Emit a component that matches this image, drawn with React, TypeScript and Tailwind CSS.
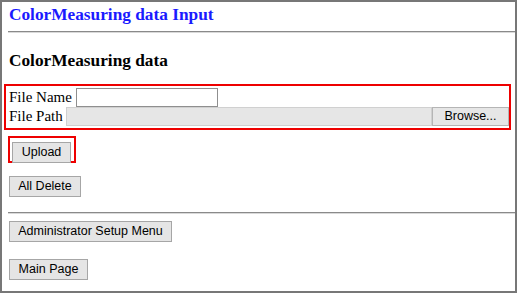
import React from 'react';

const serif = { fontFamily: '"Liberation Serif", "Times New Roman", serif' };

function Btn({ children, className = '' }: { children: React.ReactNode; className?: string }) {
    return (
        <button
            className={`h-[21px] px-0 whitespace-nowrap bg-[#e5e5e5] border border-[#a6a6a6] text-[12.5px] leading-none text-black font-['Liberation_Sans',Arial,sans-serif] ${className}`}
        >
            {children}
        </button>
    );
}

export default function App() {
    return (
        <div className="w-[517px] h-[293px] border-2 border-[#777777] bg-white overflow-hidden" style={serif}>
            <div className="pl-[7px] pt-[2px]">
                <h1 className="text-[17.3px] leading-[21px] font-bold text-[#1a1aff]">ColorMeasuring data Input</h1>
            </div>
            <div className="ml-[6px] mt-[6px] border-t border-t-[#8a8a8a] border-b border-b-[#d9d9d9]" />
            <h3 className="pl-[7px] mt-[17px] text-[17.3px] leading-[21px] font-bold text-black">ColorMeasuring data</h3>

            <div className="ml-[2px] mt-[13px] w-[507px] border-2 border-[#ee0000] pl-[3px] pt-[2px] pb-[2px] text-[15px] leading-[19px]">
                <div className="flex items-center h-[19px]">
                    <span>File Name</span>
                    <input className="ml-[4px] w-[142px] h-[19px] border border-[#8f8f8f] bg-white" />
                </div>
                <div className="flex items-center h-[19px]">
                    <span>File Path</span>
                    <div className="ml-[3px] flex-1 h-[19px] bg-[#e6e6e6] border border-[#d0d0d0]" />
                    <div className="w-[77px] h-[19px] bg-[#e6e6e6] border border-[#b5b5b5] flex items-center justify-center text-[12.5px] font-['Liberation_Sans',Arial,sans-serif]">
                        Browse...
                    </div>
                </div>
            </div>

            <div className="ml-[6px] mt-[6px] w-[68px] h-[27px] border-2 border-[#ee0000] pl-[2px] pt-[1px]">
                <Btn className="w-[59px]">Upload</Btn>
            </div>

            <div className="pl-[7px] mt-[10px]">
                <Btn className="w-[72px]">All Delete</Btn>
            </div>

            <div className="ml-[6px] mt-[15px] border-t border-t-[#8a8a8a] border-b border-b-[#d9d9d9]" />

            <div className="pl-[7px] mt-[4px]">
                <Btn className="w-[163px]">Administrator Setup Menu</Btn>
            </div>
            <div className="pl-[7px] mt-[14px]">
                <Btn className="w-[79px]">Main Page</Btn>
            </div>
        </div>
    );
}
